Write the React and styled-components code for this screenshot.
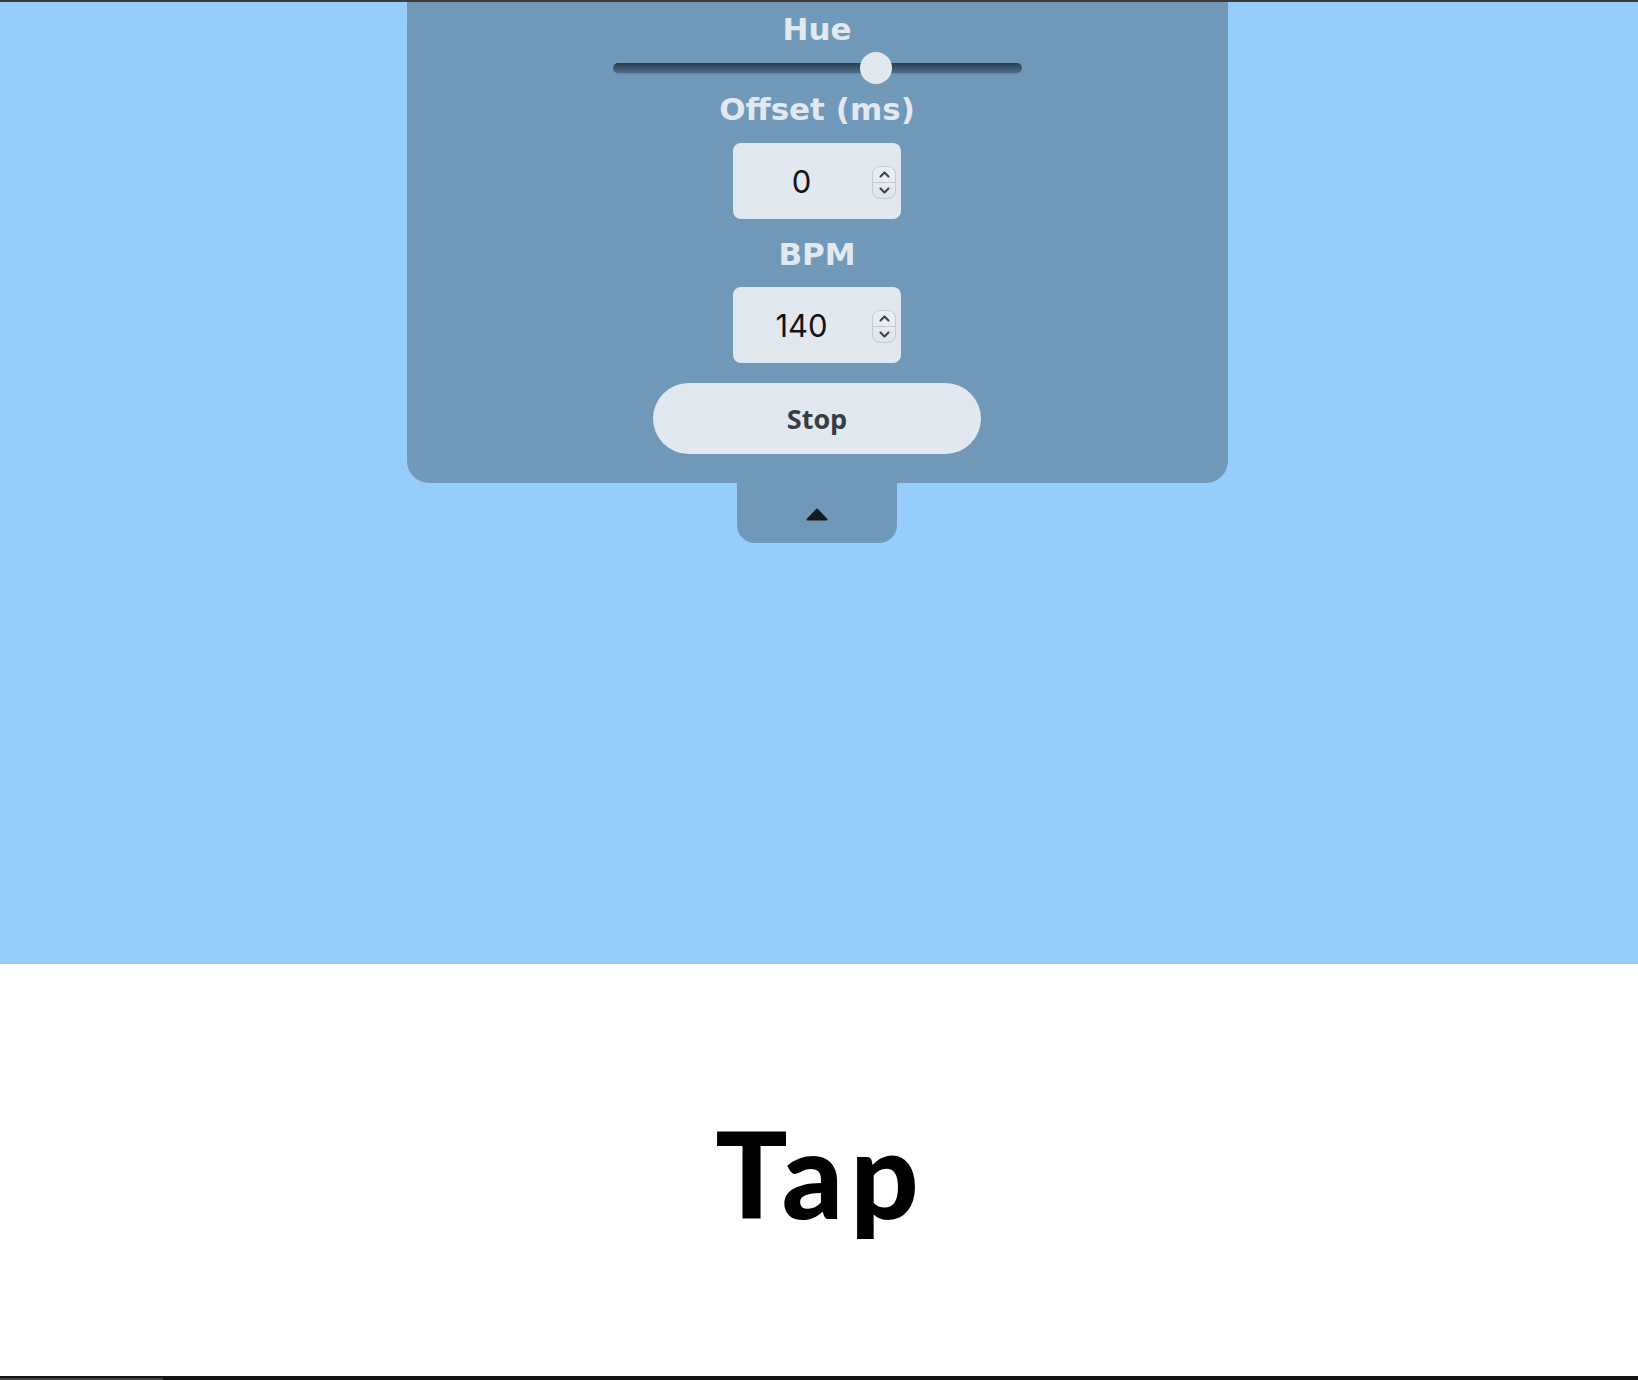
import React, { useState } from 'react';
import styled, { createGlobalStyle } from 'styled-components';

const Global = createGlobalStyle`
  html, body { margin: 0; padding: 0; }
  body { background: #ffffff; font-family: "DejaVu Sans", sans-serif; overflow: hidden; }
  * { box-sizing: border-box; }
`;

const Page = styled.div`
  width: 1638px;
  height: 1380px;
  display: flex;
  flex-direction: column;
`;

const TopEdge = styled.div`
  flex: none;
  height: 2px;
  background: #3b3b3b;
`;

const Stage = styled.section`
  flex: none;
  height: 962px;
  background: #97cdfb;
  display: flex;
  flex-direction: column;
  align-items: center;
  padding-right: 4px;
`;

const Panel = styled.div`
  width: 821px;
  background: #7099b9;
  border-radius: 0 0 22px 22px;
  display: flex;
  flex-direction: column;
  align-items: center;
  padding: 9px 0 29px;
`;

const Label = styled.label`
  display: block;
  font: bold 31px/37px "DejaVu Sans", sans-serif;
  color: #e2e8f0;
  margin-top: ${(p) => p.$gap || 0}px;
`;

const Range = styled.input.attrs({ type: 'range' })`
  -webkit-appearance: none;
  appearance: none;
  width: 409px;
  height: 32px;
  margin: 4px 0 0;
  background: transparent;
  outline: none;

  &::-webkit-slider-runnable-track {
    height: 10px;
    border-radius: 5px;
    background: linear-gradient(#2a3e51, #4e6d8b);
    box-shadow: 0 1px 1px rgba(0, 0, 0, 0.12);
  }
  &::-webkit-slider-thumb {
    -webkit-appearance: none;
    appearance: none;
    width: 32px;
    height: 32px;
    border-radius: 50%;
    border: none;
    background: #e2e8f0;
    margin-top: -11px;
  }
`;

const Field = styled.div`
  width: 168px;
  height: 76px;
  border-radius: 8px;
  background: #e2e8f0;
  display: flex;
  align-items: center;
  padding: 0 5px 0 0;
  margin-top: ${(p) => p.$gap || 0}px;
`;

const NumInput = styled.input`
  flex: 1;
  min-width: 0;
  border: none;
  background: transparent;
  outline: none;
  padding: 0;
  text-align: center;
  font: 400 31px "Inter", sans-serif;
  color: #141414;
`;

const Spinner = styled.div`
  flex: none;
  width: 24px;
  height: 33px;
  margin-left: 2px;
  margin-top: 3px;
  border: 1px solid #c4cbd3;
  border-radius: 8px;
  background: linear-gradient(#edf1f5, #dfe5ec);
  display: flex;
  flex-direction: column;
  overflow: hidden;
`;

const SpinHalf = styled.span`
  flex: 1;
  display: flex;
  align-items: center;
  justify-content: center;
  & + & {
    border-top: 1px solid #c4cbd3;
  }
`;

const StopButton = styled.button`
  width: 328px;
  height: 71px;
  margin-top: 20px;
  border: none;
  border-radius: 36px;
  background: #e2e8f0;
  color: #363d45;
  font: 700 27px "Open Sans", sans-serif;
  cursor: pointer;
`;

const Tab = styled.button`
  width: 160px;
  height: 60px;
  border: none;
  border-radius: 0 0 18px 18px;
  background: #7099b9;
  display: flex;
  align-items: center;
  justify-content: center;
  padding: 3px 0 0;
  cursor: pointer;
`;

const TapArea = styled.section`
  flex: none;
  height: 412px;
  display: flex;
  align-items: center;
  justify-content: center;
  padding: 6px 4px 0 0;
`;

const TapText = styled.h1`
  margin: 0;
  font: 900 120px/1 "Lato", sans-serif;
  color: #000;
  letter-spacing: 7px;
  padding-left: 7px;
`;

const BottomEdge = styled.div`
  flex: none;
  height: 4px;
  background: #141414;
  display: flex;
  align-items: flex-end;
`;

const ScrollThumb = styled.div`
  width: 163px;
  height: 2px;
  background: #444444;
`;

const Chevron = ({ up }) => (
  <svg width="11" height="7" viewBox="0 0 11 7">
    <path
      d={up ? 'M1.5 5.5 L5.5 1.5 L9.5 5.5' : 'M1.5 1.5 L5.5 5.5 L9.5 1.5'}
      fill="none"
      stroke="#3b4046"
      strokeWidth="2"
      strokeLinecap="round"
      strokeLinejoin="round"
    />
  </svg>
);

const NumberField = ({ value, onChange, gap }) => (
  <Field $gap={gap}>
    <NumInput value={value} onChange={(e) => onChange(e.target.value)} />
    <Spinner>
      <SpinHalf onClick={() => onChange(String(Number(value) + 1))}>
        <Chevron up />
      </SpinHalf>
      <SpinHalf onClick={() => onChange(String(Number(value) - 1))}>
        <Chevron />
      </SpinHalf>
    </Spinner>
  </Field>
);

export default function App() {
  const [hue, setHue] = useState(236);
  const [offset, setOffset] = useState('0');
  const [bpm, setBpm] = useState('140');

  return (
    <Page>
      <Global />
      <TopEdge />
      <Stage>
        <Panel>
          <Label>Hue</Label>
          <Range min={0} max={360} value={hue} onChange={(e) => setHue(Number(e.target.value))} />
          <Label $gap={7}>Offset (ms)</Label>
          <NumberField value={offset} onChange={setOffset} gap={15} />
          <Label $gap={17}>BPM</Label>
          <NumberField value={bpm} onChange={setBpm} gap={14} />
          <StopButton>Stop</StopButton>
        </Panel>
        <Tab aria-label="Collapse">
          <svg width="22" height="13" viewBox="0 0 22 13">
            <path d="M11 1.5 L20.5 11.5 L1.5 11.5 Z" fill="#141a20" stroke="#141a20" strokeWidth="2" strokeLinejoin="round" />
          </svg>
        </Tab>
      </Stage>
      <TapArea>
        <TapText>Tap</TapText>
      </TapArea>
      <BottomEdge>
        <ScrollThumb />
      </BottomEdge>
    </Page>
  );
}
